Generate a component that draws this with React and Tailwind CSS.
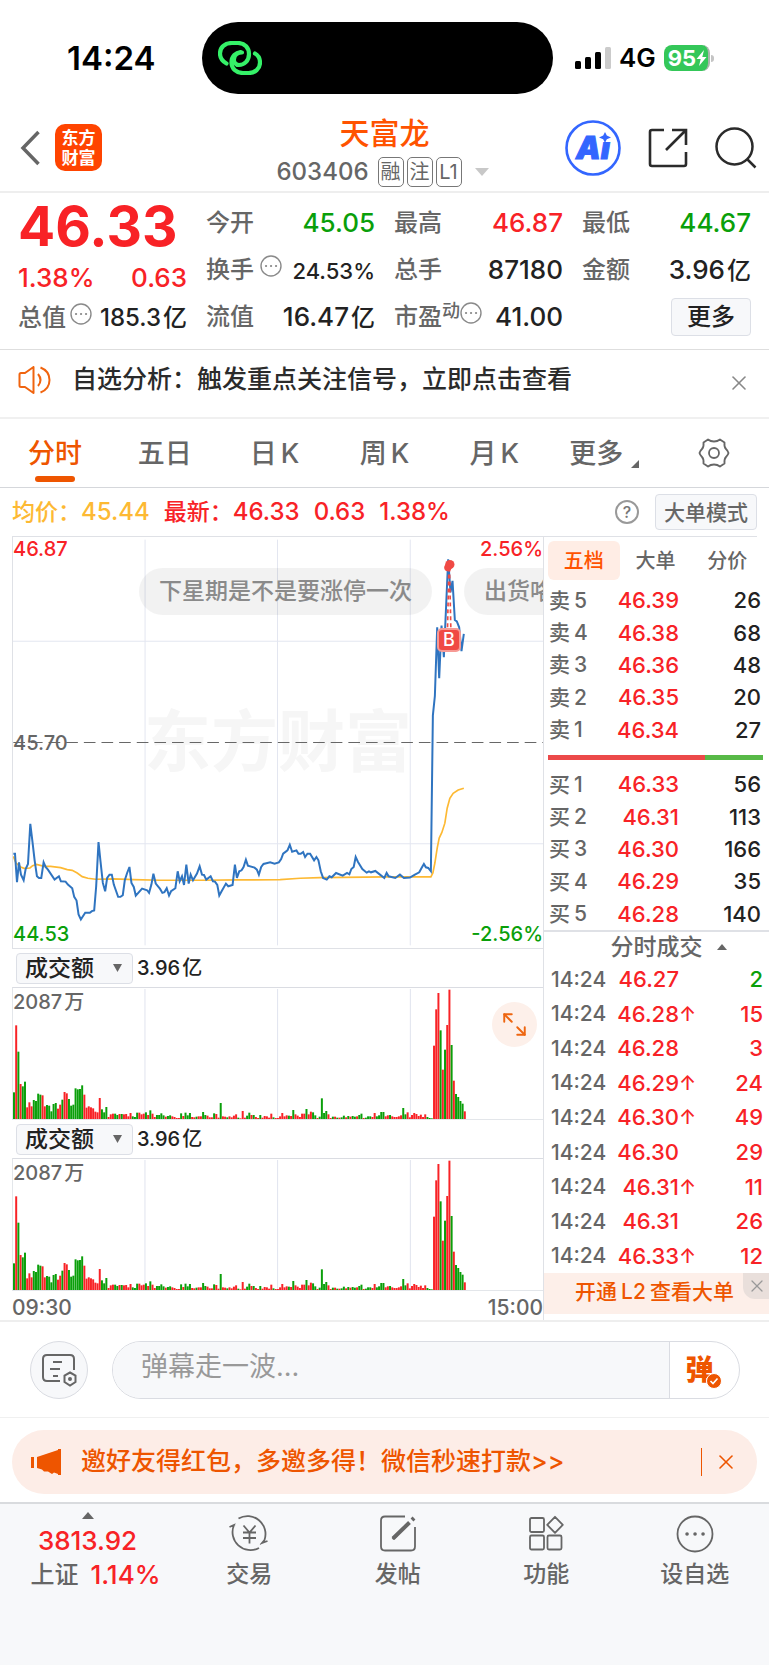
import { ArrowDownRight, ArrowUpLeft, X } from "lucide-react";

const fields = [
  { label: "今开", value: "45.05", color: "text-[#0a9f0a]" },
  { label: "最高", value: "46.87", color: "text-[#f82226]" },
  { label: "最低", value: "44.67", color: "text-[#0a9f0a]" },
  { label: "换手", value: "24.53%", hint: true, small: true },
  { label: "总手", value: "87180" },
  { label: "金额", value: "3.96", unit: "亿" },
  { label: "流值", value: "16.47", unit: "亿" },
  { label: "市盈", value: "41.00", sup: "动", hint: true },
];

const tabs = [["分时"], ["五日"], ["日", "K"], ["周", "K"], ["月", "K"]];

const asks = [
  [5, "46.39", 26],
  [4, "46.38", 68],
  [3, "46.36", 48],
  [2, "46.35", 20],
  [1, "46.34", 27],
];

const bids = [
  [1, "46.33", 56],
  [2, "46.31", 113],
  [3, "46.30", 166],
  [4, "46.29", 35],
  [5, "46.28", 140],
];

const trades = [
  { price: "46.27", qty: 2, sell: true },
  { price: "46.28", qty: 15, up: true },
  { price: "46.28", qty: 3 },
  { price: "46.29", qty: 24, up: true },
  { price: "46.30", qty: 49, up: true },
  { price: "46.30", qty: 29 },
  { price: "46.31", qty: 11, up: true },
  { price: "46.31", qty: 26 },
  { price: "46.33", qty: 12, up: true },
];

const priceLine =
  "38,972 43,972 49,1058 55,998 61,1035 69,1052 75,1018 82,1003 89,882 96,940 102,992 109,1040 115,1045 122,1045 129,998 135,1012 142,1020 162,1050 175,1040 181,1055 195,1056 202,1065 215,1076 221,1102 228,1113 234,1155 241,1170 254,1150 268,1150 274,1145 281,1143 287,1070 294,937 300,995 307,1060 314,1085 320,1045 327,1035 334,1035 340,1065 353,1102 360,1102 367,1097 373,1052 380,1030 387,1012 393,1060 400,1072 406,1098 425,1077 440,1082 446,1090 453,1065 459,1032 466,1062 479,1078 486,1090 492,1088 499,1076 506,1098 512,1085 525,1076 532,1025 538,1055 545,1040 551,1066 558,1005 565,1062 571,1035 578,1052 590,1032 598,1010 605,1035 611,1036 618,1050 631,1040 638,1055 644,1056 651,1066 657,1098 664,1085 677,1062 684,1070 697,1066 704,1005 710,1045 717,1025 724,1022 730,1012 737,990 743,1008 763,1014 770,1020 776,1035 783,1012 790,1003 810,998 823,1002 836,998 843,988 849,972 862,962 869,945 876,966 889,962 895,972 902,972 909,967 915,982 922,972 930,972 942,992 949,982 955,992 962,1025 969,1045 980,1050 988,1040 995,1043 1008,1030 1028,1038 1041,1030 1048,1034 1054,1018 1061,1012 1067,982 1074,997 1087,1018 1100,1029 1107,1025 1113,1028 1126,1024 1140,1035 1153,1045 1160,1030 1166,1040 1186,1045 1200,1035 1212,1045 1230,1044 1245,1035 1258,1028 1265,1015 1272,1003 1278,1013 1285,1015 1293,1025 1299,555 1305,497 1312,290 1318,443 1325,285 1332,380 1345,85 1352,185 1358,150 1365,268 1371,272 1378,290 1385,362 1392,310";

const avgLine =
  "38,980 46,1000 60,1012 70,1016 88,1015 96,1008 108,1004 130,1010 150,1010 180,1014 200,1020 215,1022 230,1030 245,1041 262,1046 285,1049 340,1048 400,1050 480,1052 600,1052 720,1051 840,1050 900,1046 960,1044 1160,1042 1293,1042 1299,1030 1305,1000 1312,955 1318,925 1326,908 1335,880 1342,835 1350,805 1360,790 1375,780 1392,775";

// turnover per minute, r = up, g = down
const volumes =
  "g80 r281 g202 r105 g98 g112 r35 r50 r38 g57 g54 g76 g73 r71 r38 g42 g40 g23 g45 g48 r31 r43 g58 r81 r77 g60 g40 g43 g92 g89 g90 g101 r73 r34 r38 r35 r32 r22 r20 r63 g29 g20 g36 r6 r14 r16 g16 g12 r15 g15 r14 r15 r8 r18 g8 g6 g19 r19 r14 r16 g20 r12 g26 r16 r6 g12 g12 g17 g11 r7 g9 g11 r8 r6 r3 r3 g17 r9 g19 g11 g18 r6 r5 g7 r8 r8 g21 g12 r10 r5 r5 g17 r15 r4 g48 r8 r7 g5 r8 r5 r10 r14 g4 r2 r24 r4 g10 g19 r12 g12 r6 r3 g12 r4 r9 r8 r4 r16 g5 r3 r3 r8 r18 r8 r11 g10 r9 g27 r14 r10 r6 r16 r16 g30 r14 r22 g20 g11 r3 g7 g62 g18 g24 r14 r3 g7 r7 g4 r4 g5 g10 r5 g9 r7 g9 g7 r8 g12 g16 r3 g4 g8 g8 r6 r18 g8 g11 g21 g21 r8 r11 g12 r8 r6 r6 r8 r11 g33 g14 r20 r5 r12 r18 r15 r9 r13 r6 r14 g6 g3 g2 r220 r329 r378 g266 r148 g208 r282 r388 g222 r115 g75 g66 g54 g46 r23"
    .split(" ")
    .map((v) => ({ up: v[0] === "r", size: Number(v.slice(1)) }));

function Hint() {
  return (
    <svg viewBox="0 0 22 22" className="w-[22px] h-[22px] shrink-0" fill="none" stroke="#8a8a8a" strokeWidth="1.4">
      <circle cx="11" cy="11" r="10" />
      <path d="M6 11h.1M11 11h.1M16 11h.1" strokeWidth="2.2" strokeLinecap="round" />
    </svg>
  );
}

function StatusBar() {
  return (
    <div className="grid grid-cols-[202fr_351fr_216fr] items-center pt-[22px]">
      <span className="pl-[67px] text-[33px] leading-none font-semibold text-black">14:24</span>
      <div className="h-[72px] rounded-full bg-black flex items-center pl-4">
        <svg viewBox="0 0 44 34" className="w-11 h-[34px]" fill="none" stroke="#35f168" strokeWidth="4.2" strokeLinecap="round">
          <path d="M8.500 22.500C4 20 2 16.500 2 12.500C2 6 7 2 14 2H20C27 2 31 7 31 13C31 20 26 24 21 24C17.500 24 15.500 21 16 18C16.500 14 20 11.500 24 11.500" />
          <path d="M37 12.500C40.500 14.500 42 17.500 42 21.500C42 28 37 32 30.500 32H25C18 32 13.500 27.500 13.500 21.500C13.500 15 18 11.500 22.500 11" />
        </svg>
      </div>
      <div className="flex items-center gap-2 pl-[22px]">
        <svg viewBox="0 0 36 24" className="w-9 h-6">
          <rect x="0" y="15" width="6" height="8" rx="1.500" />
          <rect x="10" y="11" width="6" height="12" rx="1.500" />
          <rect x="20" y="6" width="6" height="17" rx="1.500" />
          <rect x="30" y="1" width="6" height="22" rx="1.500" fill="#cbcbcb" />
        </svg>
        <span className="text-[26px] leading-none font-semibold text-black">4G</span>
        <div className="flex items-center gap-px">
          <div className="flex items-center h-[26px] w-[46px] pl-1 rounded-lg bg-[#34c759] border-r-2 border-[#a9b3ab] text-white">
            <span className="text-[22px] leading-none font-bold">95</span>
            <svg viewBox="0 0 10 16" className="w-[11px] h-4" fill="currentColor">
              <path d="M7.500 0L0 9h4.200L2.500 16L10 7H5.800Z" />
            </svg>
          </div>
          <span className="w-[3px] h-[7px] rounded-r-full bg-[#c4c4c4]" />
        </div>
      </div>
    </div>
  );
}

function Header() {
  return (
    <header className="grid grid-cols-[1fr_auto_1fr] items-center h-[77px] mt-[22px] border-b-2 border-[#eeeeee]">
      <div className="flex items-center gap-[15px] pl-5 pb-3">
        <button aria-label="返回">
          <svg viewBox="0 0 20 36" className="w-5 h-9" fill="none" stroke="#666" strokeWidth="3.500">
            <path d="M18.500 2L3 18L18.500 34" />
          </svg>
        </button>
        <div className="w-[47px] h-[47px] rounded-[10px] bg-[#ff4400] text-white font-bold text-[17px] leading-5 flex flex-col items-center justify-center">
          <span>东方</span>
          <span>财富</span>
        </div>
      </div>
      <div className="flex flex-col items-center gap-2 pb-1">
        <h1 className="text-[30px] leading-8 font-medium text-[#ff5300]">天富龙</h1>
        <div className="flex items-center gap-[3px] pr-1 text-[#666]">
          <span className="mr-1.5 text-2xl leading-[30px] font-medium">603406</span>
          {["融", "注", "L1"].map((tag) => (
            <span
              key={tag}
              className="flex items-center justify-center w-[26px] h-[30px] rounded-[5px] border border-[#777] text-[20px] leading-none"
            >
              {tag}
            </span>
          ))}
          <svg viewBox="0 0 14 8" className="w-3.5 h-2 ml-2.5" fill="#c8c8c8">
            <path d="M0 0h14L7 8Z" />
          </svg>
        </div>
      </div>
      <div className="flex items-center justify-end gap-[27px] pr-3 pb-3">
        <button aria-label="AI 助手">
          <svg viewBox="0 0 56 56" className="w-14 h-14">
            <text
              x="11"
              y="39"
              fontSize="31"
              fontWeight="900"
              fontStyle="italic"
              fill="#3366ff"
              stroke="#3366ff"
              className="font-['Inter']"
            >
              Ai
            </text>
            <path d="M34 9h14v13H34Z" fill="#fff" />
            <path d="M40 12l1.800 3.500L46 17.500l-4.200 1.800L40 23l-1.800-3.700L34 17.500l4.200-2Z" fill="#3366ff" />
            <circle cx="28" cy="28" r="26.500" fill="none" stroke="#3366ff" strokeWidth="2.600" />
          </svg>
        </button>
        <button aria-label="分享">
          <svg viewBox="0 0 40 40" className="w-10 h-10" fill="none" stroke="#2b2b2b" strokeWidth="2.600">
            <path d="M16 2H4Q2 2 2 4V36Q2 38 4 38H36Q38 38 38 36V24" />
            <path d="M24 2H38V17M38 2L18 22" />
          </svg>
        </button>
        <button aria-label="搜索">
          <svg viewBox="0 0 42 42" className="w-[42px] h-[42px]" fill="none" stroke="#2b2b2b" strokeWidth="2.500">
            <circle cx="19.500" cy="19.500" r="18" />
            <path d="M32 32L40.500 40.500" />
          </svg>
        </button>
      </div>
    </header>
  );
}

function Field({ label, value, unit, color = "text-[#222]", sup, hint, small }) {
  return (
    <div className="flex items-center justify-between h-[47px] whitespace-nowrap">
      <span className="flex items-center text-2xl font-medium text-[#666]">
        {label}
        {sup && <span className="pb-3 text-[18px] leading-none">{sup}</span>}
        {hint && (
          <span className={sup ? "pb-2" : "pb-2 ml-1.5"}>
            <Hint />
          </span>
        )}
      </span>
      <span className={`font-medium ${small ? "text-[22px] pt-1" : "text-[26px]"} ${color}`}>
        {value}
        {unit && <span className="ml-0.5 text-2xl">{unit}</span>}
      </span>
    </div>
  );
}

function Quote() {
  return (
    <section className="grid grid-cols-4 gap-x-[19px] px-[18px] pb-[9px] border-b border-[#dedede]">
      <div>
        <div className="pt-1.5 text-[55px] leading-[55px] font-bold text-[#f82226]">46.33</div>
        <div className="flex justify-between mt-[3px] h-10 items-center text-[26px] font-medium text-[#f82226]">
          <span>1.38%</span>
          <span>0.63</span>
        </div>
        <div className="flex items-center justify-between h-[42px] whitespace-nowrap">
          <span className="flex items-center text-2xl font-medium text-[#666]">
            总值
            <span className="pb-2 ml-1">
              <Hint />
            </span>
          </span>
          <span className="text-2xl font-medium text-[#222]">
            185.3<span className="ml-0.5">亿</span>
          </span>
        </div>
      </div>
      <div className="col-span-3 grid grid-cols-3 gap-x-[19px] pt-1.5">
        {fields.map((f) => (
          <Field key={f.label} {...f} />
        ))}
        <div className="flex items-center justify-end">
          <button className="w-20 h-[38px] rounded border border-[#dcdfe6] bg-[#f7f8fa] text-2xl leading-none font-medium text-[#222]">
            更多
          </button>
        </div>
      </div>
    </section>
  );
}

function Notice() {
  return (
    <section className="flex items-center h-[69px] px-[18px] pb-[7px] border-b-2 border-[#f0f0f0]">
      <svg viewBox="0 0 34 28" className="w-[34px] h-7" fill="none" stroke="#f0640f" strokeWidth="2">
        <path d="M1.500 8.500Q1.500 7 3 7H7L15.500 1V27L7 21H3Q1.500 21 1.500 19.500Z" strokeLinejoin="round" />
        <path d="M20 8Q25 14 20 20M22.500 1.500Q31.500 5 31.500 14T22.500 26.500" />
      </svg>
      <a href="#analysis" className="ml-5 flex-1 text-[25px] font-medium text-[#2b2b2b]">
        自选分析：触发重点关注信号，立即点击查看
      </a>
      <button aria-label="关闭" className="pt-1.5">
        <X className="w-6 h-6 text-[#888]" strokeWidth={1.6} />
      </button>
    </section>
  );
}

function Tabs() {
  return (
    <nav className="grid grid-cols-7 h-[69px] border-b border-[#d5d7db] text-[27px] font-medium text-[#666]">
      {tabs.map((tab, i) => (
        <button key={tab.join("")} className="flex flex-col items-center pt-[13px]">
          <span className={`flex items-center gap-1 h-11 ${i === 0 ? "text-[#ee5500]" : ""}`}>
            {tab.map((part) => (
              <span key={part}>{part}</span>
            ))}
          </span>
          {i === 0 && <span className="w-10 h-1.5 rounded-full bg-[#ee5500]" />}
        </button>
      ))}
      <button className="flex justify-center pt-[13px]">
        <span className="flex items-center h-11">更多</span>
        <svg viewBox="0 0 8 8" className="w-2 h-2 ml-2 mt-7" fill="#666">
          <path d="M8 0V8H0Z" />
        </svg>
      </button>
      <button aria-label="设置" className="flex justify-center pt-[19px]">
        <svg viewBox="0 0 32 30" className="w-8 h-[30px]" fill="none" stroke="#666" strokeWidth="1.800" strokeLinejoin="round">
          <path d="M10 1.500Q12.500 3.500 16 3.500T22 1.500L26.500 4.500Q26 9 28 11T30.500 15Q30 17 28 19T26.500 25.500L22 28.500Q19.500 26.500 16 26.500T10 28.500L5.500 25.500Q6 21 4 19T1.500 15Q2 13 4 11T5.500 4.500Z" />
          <circle cx="16" cy="15" r="5" />
        </svg>
      </button>
    </nav>
  );
}

function PriceInfo() {
  return (
    <div className="mx-3 flex items-center h-[49px] border-b border-[#dfe1e6] text-[23px] font-medium text-[#f82226]">
      <span className="text-[#fdb933]">均价：</span>
      <span className="text-2xl text-[#fdb933]">45.44</span>
      <span className="ml-3.5">最新：</span>
      <span className="flex gap-3.5 text-2xl">
        <span>46.33</span>
        <span>0.63</span>
        <span>1.38%</span>
      </span>
      <button aria-label="说明" className="ml-auto mr-4 w-6 h-6 rounded-full border-2 border-[#999] text-base leading-none text-[#777]">
        ?
      </button>
      <button className="w-[102px] h-9 rounded border border-[#dcdfe6] bg-[#f7f8fa] text-[21px] leading-none font-medium text-[#666]">
        大单模式
      </button>
    </div>
  );
}

function PriceChart() {
  return (
    <div className="relative h-[412px] overflow-hidden border-l border-b border-[#dfe1e6] text-[20px] leading-none font-medium">
      <div className="absolute inset-x-0 top-[171px] text-center text-[67px] font-bold text-[#f6f6f6]">东方财富</div>
      <svg viewBox="37 18 1593 1238" preserveAspectRatio="none" className="absolute inset-0 w-full h-full" fill="none">
        <path d="M434 26V1248M832 26V1248M1231 26V1248M37 332H1630M37 942H1630" stroke="#e3e6f0" strokeWidth="3" />
        <path d="M38 637H1630" stroke="#666" strokeWidth="3" strokeDasharray="35 18" />
        <polyline points={avgLine} stroke="#fdb933" strokeWidth="5" />
        <polyline points={priceLine} stroke="#2f74c0" strokeWidth="6" />
        <path d="M1347 110L1343 295M1349 110L1353 295" stroke="#f04a44" strokeWidth="5" strokeDasharray="12 9" />
        <circle cx="1350" cy="101" r="14" fill="#f04a44" />
        <circle cx="1344" cy="110" r="11" fill="#f04a44" />
      </svg>
      <span className="absolute left-0 top-0.5 text-[#f82226]">46.87</span>
      <span className="absolute right-0 top-0.5 text-[#f82226]">2.56%</span>
      <span className="absolute left-0 top-[196px] text-[#666]">45.70</span>
      <span className="absolute left-0 bottom-1 text-[#0a9f0a]">44.53</span>
      <span className="absolute right-0 bottom-1 text-[#0a9f0a]">-2.56%</span>
      <div className="absolute left-[126px] top-[31px] flex gap-8 whitespace-nowrap text-[23px] text-[#8a8a8a]">
        <span className="flex items-center h-[47px] px-5 rounded-full bg-black/5">下星期是不是要涨停一次</span>
        <span className="flex items-center h-[47px] px-5 rounded-full bg-black/5">出货咯</span>
      </div>
      <span className="absolute left-[80%] top-[91px] flex items-center justify-center w-6 h-6 rounded-[5px] border-2 border-[#f79a95] bg-[#f04a44] text-[18px] text-white">
        B
      </span>
    </div>
  );
}

function VolumeChart({ id, children }) {
  return (
    <>
      <div className="flex items-center h-[38px] pl-1">
        <div className="relative">
          <select
            aria-label={`指标 ${id}`}
            className="appearance-none w-[117px] h-[31px] pl-2 rounded border border-[#dcdfe6] bg-[#f7f8fa] text-[23px] leading-none font-medium text-[#222]"
          >
            <option>成交额</option>
          </select>
          <svg viewBox="0 0 9 8" className="pointer-events-none absolute right-[11px] top-[11px] w-[9px] h-2" fill="#666">
            <path d="M0 0h9L4.500 8Z" />
          </svg>
        </div>
        <span className="ml-1 text-[20px] font-medium text-[#222]">
          3.96<span className="ml-0.5">亿</span>
        </span>
      </div>
      <div className="relative h-[133px] border-l border-y border-t-[#dadce2] border-[#e3e6ea]">
        <svg viewBox="0 0 241 393" preserveAspectRatio="none" className="absolute inset-0 w-full h-full">
          <path d="M60 3V393M120.300 3V393M180.700 3V393" stroke="#e3e6f0" strokeWidth="0.5" />
          {volumes.map((v, i) => (
            <rect key={i} x={i} y={393 - v.size} width="0.9" height={v.size} fill={v.up ? "#f82226" : "#0a9f0a"} />
          ))}
        </svg>
        <span className="absolute left-0 top-0.5 text-[20px] leading-6 font-medium text-[#666]">
          2087<span className="ml-0.5">万</span>
        </span>
        {children}
      </div>
    </>
  );
}

function OrderTable({ side, rows }) {
  return (
    <table className="w-full h-[162px] table-fixed text-[22px] leading-none font-medium">
      <tbody>
        {rows.map(([level, price, qty]) => (
          <tr key={level}>
            <th scope="row" className="w-[60px] pl-[5px] text-left text-[21px] font-medium text-[#666]">
              {side}
              <span className="ml-1">{level}</span>
            </th>
            <td className="w-[75px] text-right text-[#f82226]">{price}</td>
            <td className="pr-2 text-right text-[#222]">{qty}</td>
          </tr>
        ))}
      </tbody>
    </table>
  );
}

function OrderPanel() {
  return (
    <aside className="w-[226px] shrink-0 border-l border-[#dfe1e6]">
      <div className="grid grid-cols-3 items-center h-[47px] pl-1 pr-1.5 text-[20px] font-medium text-[#666]">
        <button className="h-[39px] rounded-md bg-[#ffede5] text-[#ff5300]">五档</button>
        <button>大单</button>
        <button>分价</button>
      </div>
      <OrderTable side="卖" rows={asks} />
      <div className="flex items-center h-[22px] pt-px pl-1 pr-1.5">
        <span className="h-[5px] w-[73%] bg-[#ec4949]" />
        <span className="h-[5px] flex-1 bg-[#57b947]" />
      </div>
      <OrderTable side="买" rows={bids} />
      <button className="flex items-center justify-center gap-3.5 w-full h-8 pl-6 border-t-2 border-[#dfe1e6] text-[23px] leading-none font-medium text-[#666]">
        分时成交
        <svg viewBox="0 0 10 6" className="w-2.5 h-1.5" fill="#666">
          <path d="M0 6h10L5 0Z" />
        </svg>
      </button>
      <table className="w-full h-[311px] table-fixed text-[22px] leading-none font-medium text-[#f82226]">
        <tbody>
          {trades.map((t, i) => (
            <tr key={i}>
              <td className="w-[68px] pl-[7px] text-[21px] text-[#666]">14:24</td>
              <td className="w-[67px] text-right">{t.price}</td>
              <td className="w-[18px] text-[20px]">{t.up && "↑"}</td>
              <td className={`pr-1.5 text-right ${t.sell ? "text-[#0a9f0a]" : ""}`}>{t.qty}</td>
            </tr>
          ))}
        </tbody>
      </table>
      <div className="relative flex items-center justify-center h-[41px] pb-1 bg-[#fdefe9] text-[21px] text-[#ee5500]">
        <a href="#level2" className="pr-1 font-medium">
          开通<span className="mx-1">L2</span>查看大单
        </a>
        <button aria-label="关闭推广" className="absolute right-0 top-0 w-[26px] h-[26px] rounded-bl-xl bg-[#e9dfdb]">
          <X className="w-5 h-5 ml-1 text-[#999]" strokeWidth={1.5} />
        </button>
      </div>
    </aside>
  );
}

function CommentBar() {
  return (
    <section className="flex items-center gap-6 h-[97px] pl-[30px] pr-[29px] border-t-2 border-[#eeeeee]">
      <button aria-label="弹幕设置" className="w-[58px] h-[58px] shrink-0 flex items-center justify-center rounded-full border border-[#dadce2] bg-[#f7f8fa]">
        <svg viewBox="0 0 36 34" className="w-9 h-[34px]" fill="none" stroke="#666" strokeWidth="2">
          <path d="M19 28H6Q2 28 2 24V6Q2 2 6 2H29Q33 2 33 6V17M12 9H21M9 16H19M12 23H17" />
          <path d="M29 19.500L34.500 22.500V29L29 32.500L23.500 29V22.500Z" />
          <circle cx="29" cy="26" r="1" />
        </svg>
      </button>
      <div className="flex-1 flex h-[58px] rounded-full border border-[#dadce2] overflow-hidden">
        <input
          type="text"
          aria-label="弹幕"
          placeholder="弹幕走一波..."
          className="flex-1 min-w-0 pl-7 pb-1 bg-[#f7f8fa] text-[27px] placeholder:text-[#999]"
        />
        <button aria-label="弹幕开关" className="relative w-[70px] border-l border-[#dadce2] text-[28px] leading-none font-black text-[#ee5500]">
          <span className="pr-2.5">弹</span>
          <svg viewBox="0 0 16 16" className="absolute left-[36px] top-[31px] w-4 h-4">
            <circle cx="8" cy="8" r="7.500" fill="#ee5500" stroke="#fff" />
            <path d="M4.500 8L7 10.500L11.500 5.500" fill="none" stroke="#fff" strokeWidth="1.600" />
          </svg>
        </button>
      </div>
    </section>
  );
}

function InviteBanner() {
  return (
    <section className="border-t border-[#f0f0f0] px-3 pt-3 pb-2">
      <div className="flex items-center h-16 px-[19px] rounded-[32px] bg-[#fdede7] text-[#ee5500]">
        <svg viewBox="0 0 30 26" className="w-[30px] h-[26px]" fill="currentColor">
          <path d="M0 8H3V19H0ZM6 8L27 1V0H30V26H27V25L23 23.500L21 25L17 22.500H13L11 20.500L6 19Z" />
        </svg>
        <a href="#invite" className="ml-5 flex-1 text-[25px] font-medium">
          邀好友得红包，多邀多得！微信秒速打款&gt;&gt;
        </a>
        <span className="w-px h-7 bg-[#ee5500]" />
        <button aria-label="关闭邀请" className="ml-3">
          <X className="w-6 h-6" strokeWidth={1.6} />
        </button>
      </div>
    </section>
  );
}

const navItems = [
  {
    label: "交易",
    icon: (
      <>
        <path d="M9.500 4.500A18 18 0 0 1 35.500 26L33 29L38.500 27M30 34A18 18 0 0 1 5 11L.500 13L6 10.500" />
        <path d="M14.500 11.500L20.500 18.500L26.500 11.500M20.500 18.500V29.500M14 18.500H27M14 24H27" />
      </>
    ),
  },
  {
    label: "发帖",
    icon: (
      <>
        <path d="M27 2.500H7Q3 2.500 3 6.500V32.500Q3 36.500 7 36.500H33Q37 36.500 37 32.500V13" />
        <path d="M15 24.500L31.500 8.500M34 6L36 4" strokeWidth="4" />
        <path d="M14.500 25L19 21" strokeWidth="2.500" />
      </>
    ),
  },
  {
    label: "功能",
    icon: (
      <>
        <rect x="4" y="4" width="14" height="14" rx="1.500" />
        <rect x="4" y="21.500" width="14" height="14" rx="1.500" />
        <rect x="21.500" y="21.500" width="14" height="14" rx="1.500" />
        <path d="M29 2.800L36.800 10.800L29 18.800L21.200 10.800Z" strokeLinejoin="round" />
      </>
    ),
  },
  {
    label: "设自选",
    icon: (
      <>
        <circle cx="20" cy="20" r="17.500" />
        <path d="M12 20h.1M20 20h.1M28 20h.1" strokeWidth="3.500" strokeLinecap="round" />
      </>
    ),
  },
];

function BottomNav() {
  return (
    <nav className="flex-1 flex items-start min-h-[160px] pt-2 bg-[#f7f8fa] border-t-2 border-[#d9dbde] text-[23px] font-medium text-[#666]">
      <button className="w-[175px] pl-4 flex flex-col items-center">
        <svg viewBox="0 0 12 7" className="w-3 h-[7px] mr-4" fill="#666">
          <path d="M0 7h12L6 0Z" />
        </svg>
        <span className="mt-1 mr-4 text-[26px] leading-9 text-[#f82226]">3813.92</span>
        <span className="flex items-center gap-3 leading-8">
          <span className="text-2xl">上证</span>
          <span className="text-[26px] text-[#f82226]">1.14%</span>
        </span>
      </button>
      <div className="flex-1 grid grid-cols-4 pt-0.5">
        {navItems.map((item) => (
          <button key={item.label} className="flex flex-col items-center">
            <svg viewBox="0 0 40 40" className="w-10 h-10" fill="none" stroke="#666" strokeWidth="1.800">
              {item.icon}
            </svg>
            <span className="mt-1 leading-8">{item.label}</span>
          </button>
        ))}
      </div>
    </nav>
  );
}

export default function App() {
  return (
    <div className="flex flex-col min-h-screen bg-white font-['Inter','Noto_Sans_CJK_SC',sans-serif]">
      <StatusBar />
      <Header />
      <Quote />
      <Notice />
      <Tabs />
      <PriceInfo />
      <main className="flex">
        <div className="flex-1 min-w-0 pl-3">
          <PriceChart />
          <VolumeChart id={1}>
            <button aria-label="全屏" className="absolute right-1.5 top-3.5 w-[45px] h-[45px] rounded-full bg-[#fdf0ea] text-[#ee6611]">
              <ArrowUpLeft className="absolute left-[7px] top-[7px] w-[18px] h-[18px]" strokeWidth={2.6} />
              <ArrowDownRight className="absolute right-[7px] bottom-[7px] w-[18px] h-[18px]" strokeWidth={2.6} />
            </button>
          </VolumeChart>
          <VolumeChart id={2} />
          <div className="flex items-center justify-between h-[29px] pt-[3px] text-[21px] leading-none font-medium text-[#666]">
            <span>09:30</span>
            <span>15:00</span>
          </div>
        </div>
        <OrderPanel />
      </main>
      <CommentBar />
      <InviteBanner />
      <BottomNav />
    </div>
  );
}
